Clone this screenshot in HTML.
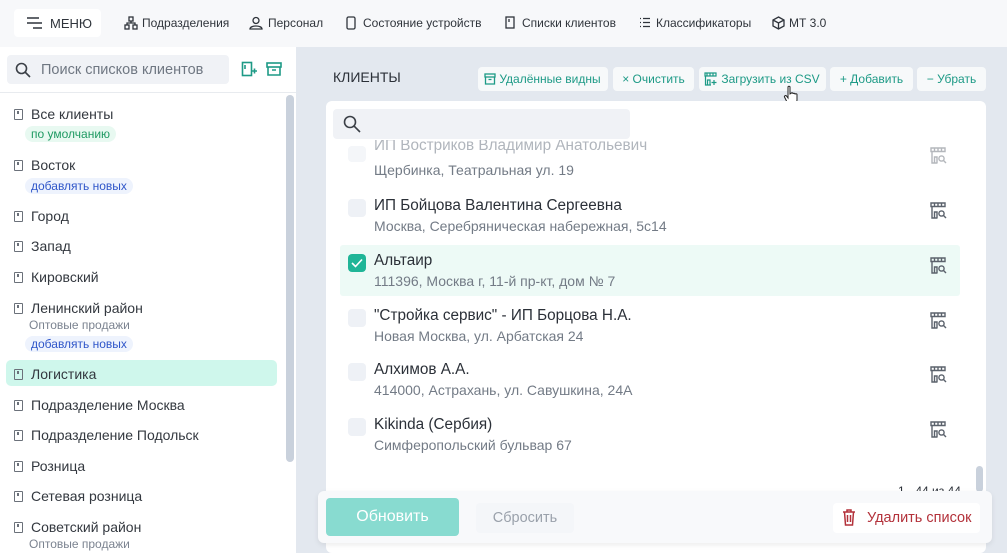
<!DOCTYPE html>
<html><head><meta charset="utf-8"><style>
*{box-sizing:border-box;margin:0;padding:0}
body{width:1007px;height:553px;overflow:hidden;background:#e3e8ef;font-family:"Liberation Sans","Noto Sans CJK SC",sans-serif;position:relative;color:#2b3038}
.a{position:absolute}
.top{left:0;top:0;width:1007px;height:47px;background:#f7f8fa}
.nav{top:16px;font-size:12px;color:#2f343b;white-space:nowrap}
.side{left:0;top:47px;width:296px;height:506px;background:#fff}
.it{left:14px;font-size:14px;color:#33383f;white-space:nowrap}
.ic{display:inline-block;width:9px;height:11px;border:1.5px solid #6b717a;border-radius:1px;margin-right:8px;vertical-align:-1px;position:relative}
.ic:after{content:"";position:absolute;left:2px;top:1px;width:2px;height:3px;background:#6b717a}
.tag{left:25px;font-size:12px;padding:1px 6px;border-radius:9px;white-space:nowrap}
.g{background:#e8f9f1;color:#1f9a63}
.b{background:#eef3fd;color:#2f56c9}
.sub{left:29px;font-size:12px;color:#7b8390}
.btn{top:67px;height:24px;background:#f7f9fa;border-radius:4px;font-size:12px;color:#1d9a86;padding:5px 0;white-space:nowrap;text-align:center}
.row .n{font-size:15.3px;color:#2b3038}
.row .d{font-size:14px;color:#737b86;margin-top:3px}
.cb{left:348px;width:18px;height:18px;border-radius:4px;background:#eef1f6}
.si{left:930px;width:17px;height:17px}
</style></head><body>
<div class="a top"></div>
<div class="a" style="left:14px;top:9px;width:87px;height:28px;background:#fff;border-radius:4px"></div>
<svg class="a" style="left:26px;top:17px" width="17" height="12"><path d="M1 1H13M1 6H16M7 11H16" stroke="#2f343b" stroke-width="1.6"/></svg>
<div class="a nav" style="left:50px;font-size:13px">МЕНЮ</div>
<svg class="a" style="left:124px;top:16px" width="14" height="14" fill="none" stroke="#2f343b" stroke-width="1.3"><rect x="5" y="1" width="4" height="4"/><rect x="1" y="9" width="4" height="4"/><rect x="9" y="9" width="4" height="4"/><path d="M7 5V7H3V9M7 7H11V9"/></svg>
<div class="a nav" style="left:142px">Подразделения</div>
<svg class="a" style="left:249px;top:16px" width="15" height="14" fill="none" stroke="#2f343b" stroke-width="1.3"><circle cx="7" cy="4.5" r="3"/><path d="M1 13C1 9 13 9 13 13Z"/></svg>
<div class="a nav" style="left:268px">Персонал</div>
<svg class="a" style="left:346px;top:16px" width="10" height="14" fill="none" stroke="#2f343b" stroke-width="1.3"><rect x="1" y="1" width="8" height="12" rx="1.5"/></svg>
<div class="a nav" style="left:363px">Состояние устройств</div>
<svg class="a" style="left:505px;top:16px" width="10" height="13" fill="none" stroke="#2f343b" stroke-width="1.3"><rect x="1" y="1" width="8" height="11"/><path d="M4 3V6"/></svg>
<div class="a nav" style="left:522px">Списки клиентов</div>
<svg class="a" style="left:639px;top:17px" width="11" height="11" fill="none" stroke="#2f343b" stroke-width="1.3"><path d="M1 1.5H2M1 5.5H2M1 9.5H2M4 1.5H11M4 5.5H11M4 9.5H11"/></svg>
<div class="a nav" style="left:656px">Классификаторы</div>
<svg class="a" style="left:772px;top:16px" width="13" height="14" fill="none" stroke="#2f343b" stroke-width="1.3"><path d="M6.5 1L12 4V10L6.5 13L1 10V4ZM1 4L6.5 7L12 4M6.5 7V13"/></svg>
<div class="a nav" style="left:789px">МТ 3.0</div>

<div class="a side"></div>
<div class="a" style="left:7px;top:55px;width:222px;height:29px;background:#f0f2f6;border-radius:4px"></div>
<svg class="a" style="left:15px;top:62px" width="16" height="16" fill="none" stroke="#3a3f46" stroke-width="1.6"><circle cx="6.5" cy="6.5" r="5"/><path d="M10 10L15 15"/></svg>
<div class="a" style="left:41px;top:62px;font-size:14.5px;color:#6f7782">Поиск списков клиентов</div>
<svg class="a" style="left:241px;top:61px" width="16" height="17" fill="none" stroke="#1d9a86" stroke-width="1.6"><rect x="1.5" y="1.5" width="9" height="13"/><path d="M4 4V8M11 10H16M13.5 7.5V12.5"/></svg>
<svg class="a" style="left:266px;top:62px" width="16" height="14" fill="none" stroke="#1d9a86" stroke-width="1.6"><rect x="1" y="1" width="14" height="4"/><path d="M2 5V13H14V5M6 8H10"/></svg>
<div class="a" style="left:0;top:92px;width:296px;height:1px;background:#e8ebef"></div>
<div class="a" style="left:286px;top:95px;width:8px;height:367px;background:#c9d1dc;border-radius:4px"></div>
<div class="a" style="left:6px;top:360px;width:271px;height:26px;background:#cff7ec;border-radius:5px"></div>

<div class="a it" style="top:106px"><span class="ic"></span>Все клиенты</div>
<div class="a tag g" style="top:126px">по умолчанию</div>
<div class="a it" style="top:157px"><span class="ic"></span>Восток</div>
<div class="a tag b" style="top:178px">добавлять новых</div>
<div class="a it" style="top:208px"><span class="ic"></span>Город</div>
<div class="a it" style="top:238px"><span class="ic"></span>Запад</div>
<div class="a it" style="top:269px"><span class="ic"></span>Кировский</div>
<div class="a it" style="top:300px"><span class="ic"></span>Ленинский район</div>
<div class="a sub" style="top:318px">Оптовые продажи</div>
<div class="a tag b" style="top:336px">добавлять новых</div>
<div class="a it" style="top:366px"><span class="ic"></span>Логистика</div>
<div class="a it" style="top:397px"><span class="ic"></span>Подразделение Москва</div>
<div class="a it" style="top:427px"><span class="ic"></span>Подразделение Подольск</div>
<div class="a it" style="top:458px"><span class="ic"></span>Розница</div>
<div class="a it" style="top:488px"><span class="ic"></span>Сетевая розница</div>
<div class="a it" style="top:519px"><span class="ic"></span>Советский район</div>
<div class="a sub" style="top:537px">Оптовые продажи</div>

<div class="a" style="left:333px;top:69px;font-size:14px;color:#2b3038">КЛИЕНТЫ</div>
<div class="a btn" style="left:478px;width:130px;padding-left:14px">Удалённые видны</div>
<svg class="a" style="left:484px;top:73px" width="12" height="12" fill="none" stroke="#1d9a86" stroke-width="1.3"><rect x="1" y="1" width="10" height="3"/><path d="M1.5 4V11H10.5V4M4.5 6.5H7.5"/></svg>
<div class="a btn" style="left:613px;width:81px">× Очистить</div>
<div class="a btn" style="left:699px;width:127px;padding-left:16px">Загрузить из CSV</div>
<svg class="a" style="left:704px;top:72px" width="13" height="14" fill="none" stroke="#1d9a86" stroke-width="1.2"><path d="M1 1H12V4H1ZM3 1V4M6 1V4M9 1V4M1.5 4V13H7M3.5 13V8H6V13M10 8V13M7.5 10.5H12.5"/></svg>
<div class="a btn" style="left:830px;width:83px">+ Добавить</div>
<div class="a btn" style="left:917px;width:69px">− Убрать</div>
<svg class="a" style="left:783px;top:85px" width="16" height="22"><path d="M5 2C5 1 7 1 7 2V9L8 8.5C8 7.5 10 7.5 10 8.5V9C10 8 12 8 12 9V9.5C12 8.5 14 8.5 14 9.5V15C14 18 12 20 10 20H8C6 20 5 19 4 17L1.5 12C1 11 2.5 10 3.5 11L5 13Z" fill="#fff" stroke="#222" stroke-width="1"/></svg>

<div class="a" style="left:326px;top:101px;width:660px;height:452px;background:#fff;border-radius:6px"></div>
<div class="a" style="left:333px;top:109px;width:297px;height:30px;background:#f0f2f6;border-radius:4px"></div>
<svg class="a" style="left:343px;top:115px" width="18" height="18" fill="none" stroke="#3a3f46" stroke-width="1.6"><circle cx="7" cy="7" r="5.5"/><path d="M11 11L17 17"/></svg>

<div class="a" style="left:340px;top:245px;width:620px;height:51px;background:#edfaf6;border-radius:3px"></div>

<div class="a" style="left:340px;top:140px;width:620px;height:22px;overflow:hidden">
<div class="a" style="left:34px;top:-3px;font-size:15.3px;color:#b0b5bc">ИП Востриков Владимир Анатольевич</div></div>
<div class="a cb" style="top:146px;height:16px;background:#f4f6f9"></div>
<div class="a" style="left:374px;top:162px;font-size:14px;color:#737b86">Щербинка, Театральная ул. 19</div>

<div class="a row" style="left:374px;top:197px"><div class="n">ИП Бойцова Валентина Сергеевна</div><div class="d">Москва, Серебряническая набережная, 5с14</div></div>
<div class="a cb" style="top:199px"></div>
<div class="a row" style="left:374px;top:252px"><div class="n">Альтаир</div><div class="d">111396, Москва г, 11-й пр-кт, дом № 7</div></div>
<div class="a cb" style="top:254px;background:#1fb597"></div>
<svg class="a" style="left:351px;top:258px" width="12" height="10" fill="none" stroke="#fff" stroke-width="1.6"><path d="M1 5L4.5 8.5L11 1.5"/></svg>
<div class="a row" style="left:374px;top:307px"><div class="n">"Стройка сервис" - ИП Борцова Н.А.</div><div class="d">Новая Москва, ул. Арбатская 24</div></div>
<div class="a cb" style="top:309px"></div>
<div class="a row" style="left:374px;top:361px"><div class="n">Алхимов А.А.</div><div class="d">414000, Астрахань, ул. Савушкина, 24А</div></div>
<div class="a cb" style="top:363px"></div>
<div class="a row" style="left:374px;top:416px"><div class="n">Kikinda (Сербия)</div><div class="d">Симферопольский бульвар 67</div></div>
<div class="a cb" style="top:418px"></div>

<svg width="0" height="0" style="position:absolute"><defs><g id="s" fill="none" stroke="#5b626c" stroke-width="1.4"><path d="M1 1H15V4.5H1ZM4.5 1V4.5M8 1V4.5M11.5 1V4.5M2 4.5V16H7.5M4.5 16V10H7V16"/><circle cx="11.5" cy="11.5" r="2.6"/><path d="M13.4 13.4L16 16"/></g></defs></svg>
<svg class="a si" style="top:147px;opacity:.45"><use href="#s"/></svg>
<svg class="a si" style="top:202px"><use href="#s"/></svg>
<svg class="a si" style="top:257px"><use href="#s"/></svg>
<svg class="a si" style="top:312px"><use href="#s"/></svg>
<svg class="a si" style="top:366px"><use href="#s"/></svg>
<svg class="a si" style="top:421px"><use href="#s"/></svg>

<div class="a" style="left:976px;top:466px;width:7px;height:26px;background:#c9d1dc;border-radius:4px"></div>
<div class="a" style="left:898px;top:484px;font-size:12px;color:#2b3038">1 - 44 из 44</div>

<div class="a" style="left:318px;top:491px;width:674px;height:52px;background:#f8f9fb;border-radius:6px;box-shadow:0 2px 6px rgba(0,0,0,.08)"></div>
<div class="a" style="left:326px;top:498px;width:133px;height:38px;background:#88dbd0;border-radius:4px;color:#fff;font-size:16px;text-align:center;line-height:38px">Обновить</div>
<div class="a" style="left:476px;top:503px;width:98px;height:30px;background:#f4f6f9;border-radius:4px;color:#9aa1ab;font-size:14.5px;text-align:center;line-height:30px">Сбросить</div>
<div class="a" style="left:833px;top:503px;width:147px;height:30px;background:#fff;border-radius:4px;color:#b3313a;font-size:14.5px;line-height:30px;padding-left:34px">Удалить список</div>
<svg class="a" style="left:842px;top:509px" width="14" height="17" fill="none" stroke="#b3313a" stroke-width="1.5"><path d="M1 3H13M5 3V1H9V3M2.5 3L3.5 16H10.5L11.5 3M5.5 6V13M8.5 6V13"/></svg>
</body></html>
